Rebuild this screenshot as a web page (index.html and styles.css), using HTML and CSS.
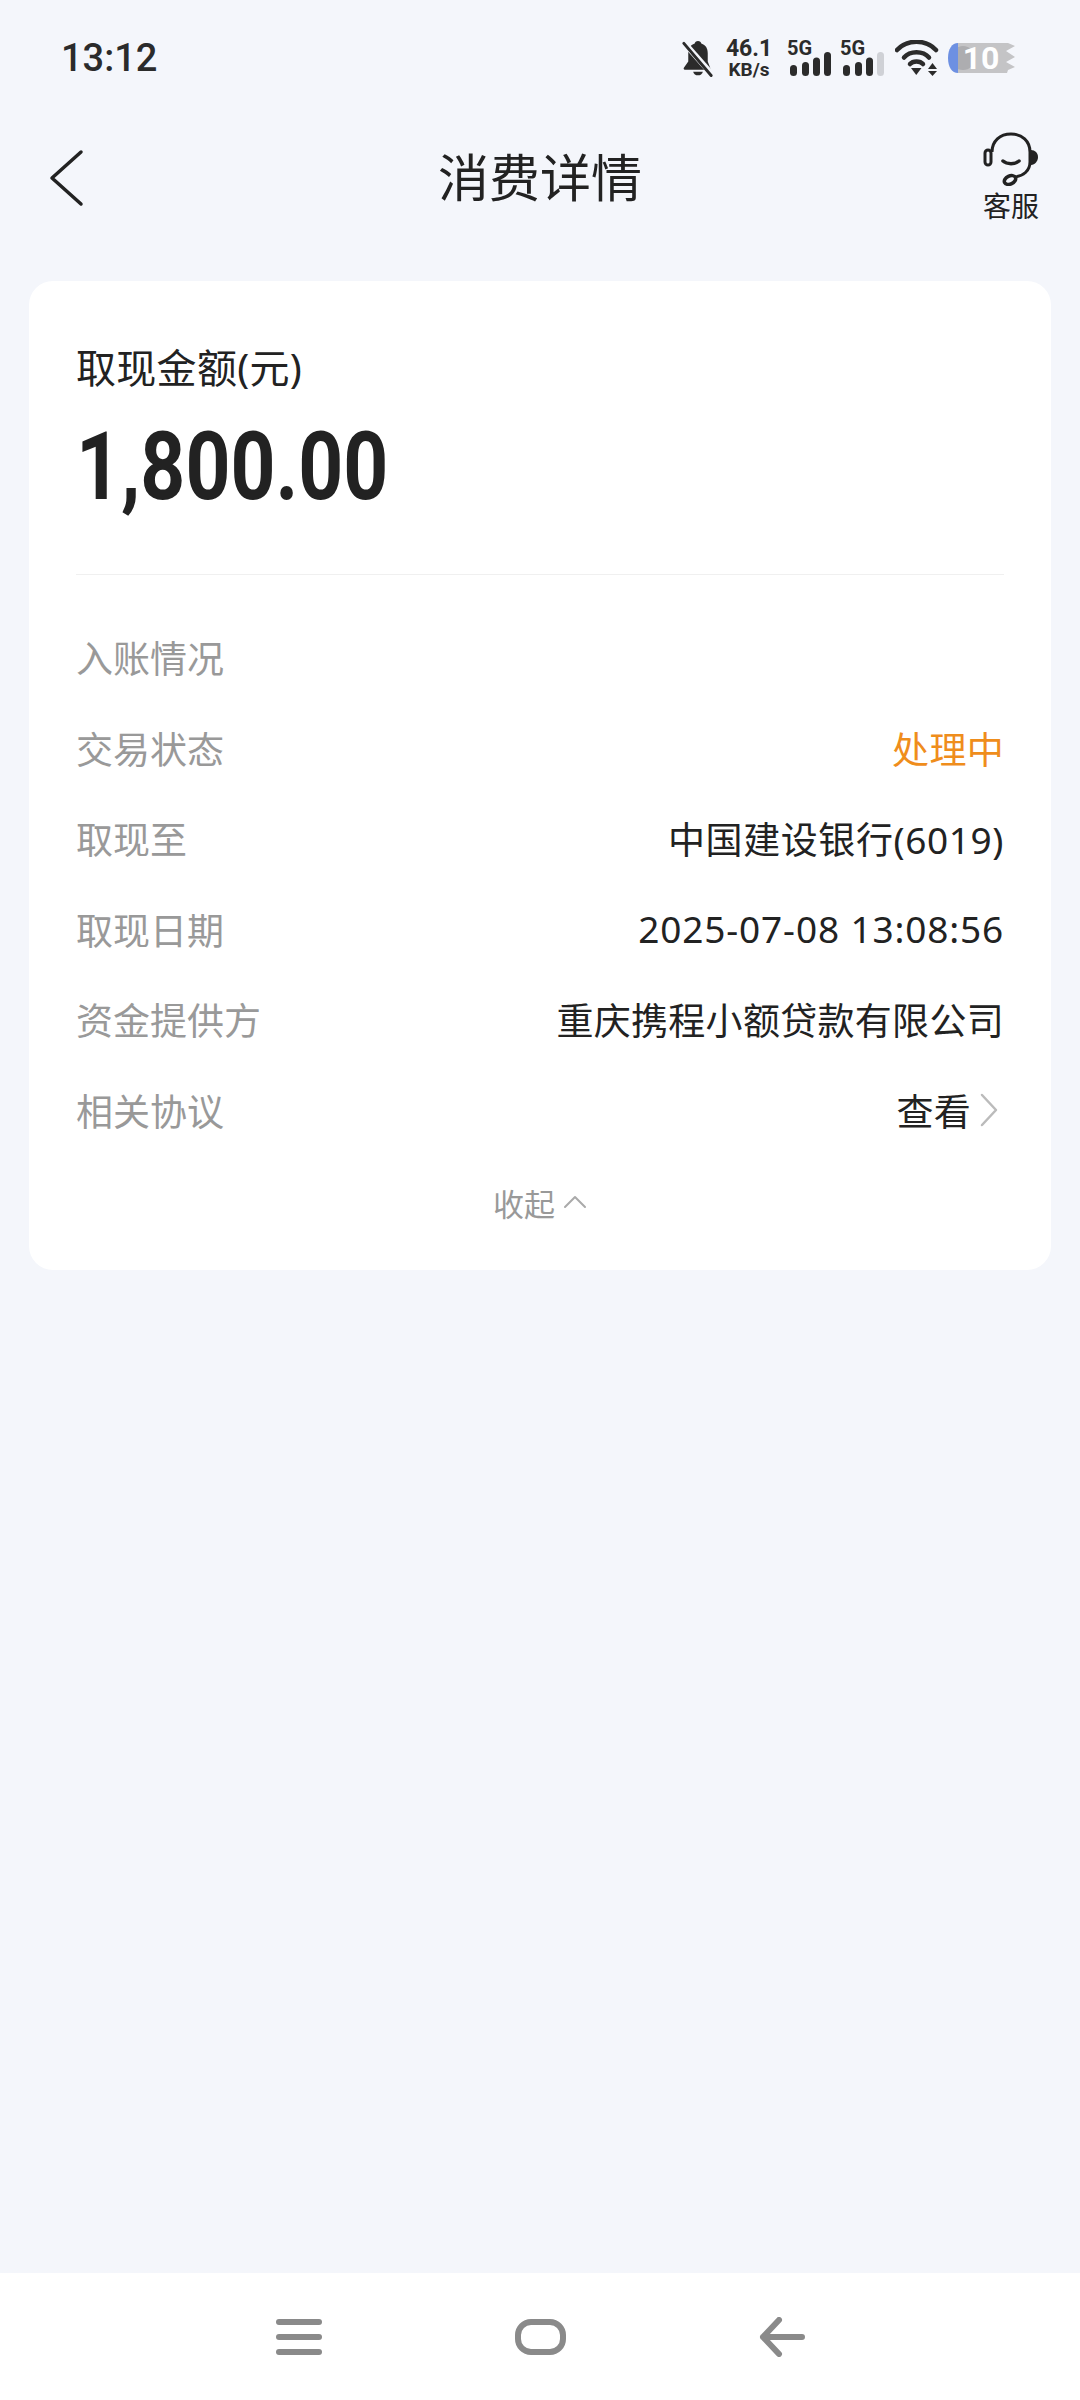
FILE: index.html
```html
<!DOCTYPE html>
<html lang="zh-CN">
<head>
    <meta charset="UTF-8">
    <meta name="viewport" content="width=device-width, initial-scale=1.0">
    <title>消费详情</title>
    <link rel="stylesheet" href="styles.css">
</head>
<body>
    <div class="page">
        <!-- Status bar -->
        <div class="status-bar">
            <span class="time">13:12</span>
            <div class="status-icons">
                <svg class="icon-bell" width="32" height="37" viewBox="0 0 32 38">
                    <path d="M16 1c-2 0-3 1.200-3.400 2.700C8 5.200 6 8.800 6 13.500V22l-4.500 6.500c-.6 1-.1 2 1 2h25c1.100 0 1.600-1 1-2L26 22v-8.500c0-4.700-2-8.300-6.600-9.800C19 2.200 18 1 16 1z" fill="#2b2b2b"/>
                    <path d="M11 32.500h10c-.6 2.300-2.600 3.800-5 3.800s-4.400-1.500-5-3.800z" fill="#2b2b2b"/>
                    <path d="M1 2l30 34" stroke="#f4f6fb" stroke-width="6"/>
                    <path d="M1.500 3.500l28 33" stroke="#2b2b2b" stroke-width="3" stroke-linecap="round"/>
                </svg>
                <div class="net-speed">
                    <span class="speed-num">46.1</span>
                    <span class="speed-unit">KB/s</span>
                </div>
                <div class="signal">
                    <span class="signal-label">5G</span>
                    <svg width="41" height="24" viewBox="0 0 41 24">
                        <rect x="0" y="13" width="7" height="11" rx="3.500" fill="#2b2b2b"/>
                        <rect x="12" y="10" width="7" height="14" rx="3.500" fill="#2b2b2b"/>
                        <rect x="23" y="5.500" width="7" height="18.500" rx="3.500" fill="#2b2b2b"/>
                        <rect x="34" y="0" width="7" height="24" rx="3.500" fill="#2b2b2b"/>
                    </svg>
                </div>
                <div class="signal">
                    <span class="signal-label">5G</span>
                    <svg width="41" height="24" viewBox="0 0 41 24">
                        <rect x="0" y="13" width="7" height="11" rx="3.500" fill="#2b2b2b"/>
                        <rect x="12" y="10" width="7" height="14" rx="3.500" fill="#2b2b2b"/>
                        <rect x="23" y="5.500" width="7" height="18.500" rx="3.500" fill="#2b2b2b"/>
                        <rect x="34" y="0" width="7" height="24" rx="3.500" fill="#cfd1d6"/>
                    </svg>
                </div>
                <svg class="icon-wifi" width="44" height="36" viewBox="0 0 44 36">
                    <path d="M2 10C12 -1 31 -1 41 10" fill="none" stroke="#2b2b2b" stroke-width="4.500" stroke-linecap="round"/>
                    <path d="M9 17.500C15 10.500 28 10.500 34 17.500" fill="none" stroke="#2b2b2b" stroke-width="4.500" stroke-linecap="round"/>
                    <path d="M15 24C18 20.500 25 20.500 28 24" fill="none" stroke="#2b2b2b" stroke-width="4.500" stroke-linecap="round"/>
                    <path d="M16 28h10.500l-5.250 7z" fill="#2b2b2b"/>
                    <path d="M33 29l4.500-6 4.500 6z" fill="#2b2b2b"/>
                    <path d="M33 31l4.500 5 4.500-5z" fill="#2b2b2b"/>
                </svg>
                <div class="battery">
                    <svg class="battery-shape" width="68" height="30" viewBox="0 0 68 30">
                        <path d="M10 0H60l7 3-9 5 9 6-9 5 9 5-7 3-1 3H10z" fill="#c4c4c6"/>
                        <circle cx="15" cy="15" r="12" fill="#adadb0"/>
                        <path d="M10 0v30C4 30 0 24 0 15S4 0 10 0z" fill="#6d90e2"/>
                    </svg>
                    <span class="battery-num">10</span>
                </div>
            </div>
        </div>

        <!-- Header -->
        <div class="nav">
            <svg class="back" width="36" height="58" viewBox="0 0 36 58">
                <path d="M33 3L4 29l0 0L33 55" fill="none" stroke="#222" stroke-width="3.500" stroke-linecap="round" stroke-linejoin="round"/>
            </svg>
            <h1 class="nav-title">消费详情</h1>
            <div class="service">
                <svg width="56" height="54" viewBox="0 0 56 54">
                    <path d="M9 20C9 9 17 2 28 2s19 7 19 18v10c0 9-7 14-15 15" fill="none" stroke="#222" stroke-width="3"/>
                    <rect x="2" y="18" width="6" height="15" rx="3" fill="none" stroke="#222" stroke-width="3"/>
                    <path d="M48 18c4 0 7 3 7 7s-3 8-7 8z" fill="#222"/>
                    <path d="M20 29c4 3.500 12 3.500 16 0" fill="none" stroke="#222" stroke-width="3.500" stroke-linecap="round"/>
                    <ellipse cx="27" cy="48" rx="6" ry="4" transform="rotate(-25 27 48)" fill="none" stroke="#222" stroke-width="3.500"/>
                </svg>
                <span class="service-label">客服</span>
            </div>
        </div>

        <!-- Detail card -->
        <div class="content">
            <div class="card">
                <div class="amount-block">
                    <div class="amount-label">取现金额(元)</div>
                    <div class="amount">1,800.00</div>
                </div>
                <div class="rows">
                    <div class="row">
                        <span class="row-label">入账情况</span>
                    </div>
                    <div class="row">
                        <span class="row-label">交易状态</span>
                        <span class="row-value status">处理中</span>
                    </div>
                    <div class="row">
                        <span class="row-label">取现至</span>
                        <span class="row-value bank">中国建设银行(6019)</span>
                    </div>
                    <div class="row">
                        <span class="row-label">取现日期</span>
                        <span class="row-value date">2025-07-08 13:08:56</span>
                    </div>
                    <div class="row">
                        <span class="row-label">资金提供方</span>
                        <span class="row-value">重庆携程小额贷款有限公司</span>
                    </div>
                    <div class="row">
                        <span class="row-label">相关协议</span>
                        <span class="row-value link">查看
                            <svg width="20" height="34" viewBox="0 0 20 34">
                                <path d="M3 2l14 15L3 32" fill="none" stroke="#bbb" stroke-width="2.500" stroke-linecap="round" stroke-linejoin="round"/>
                            </svg>
                        </span>
                    </div>
                </div>
                <div class="collapse">
                    <span>收起</span>
                    <svg width="24" height="14" viewBox="0 0 24 14">
                        <path d="M2 12L12 2l10 10" fill="none" stroke="#aaa" stroke-width="2" stroke-linecap="round" stroke-linejoin="round"/>
                    </svg>
                </div>
            </div>
        </div>

        <!-- System navigation -->
        <div class="sys-nav">
            <svg width="46" height="36" viewBox="0 0 46 36">
                <rect x="0" y="0" width="46" height="6" rx="3" fill="#8a8a8a"/>
                <rect x="0" y="15" width="46" height="6" rx="3" fill="#8a8a8a"/>
                <rect x="0" y="30" width="46" height="6" rx="3" fill="#8a8a8a"/>
            </svg>
            <svg width="51" height="36" viewBox="0 0 51 36">
                <rect x="3" y="3" width="45" height="30" rx="13" fill="none" stroke="#8a8a8a" stroke-width="6"/>
            </svg>
            <svg width="46" height="40" viewBox="0 0 46 40">
                <path d="M43 20H4M20 3L4 20l16 17" fill="none" stroke="#8a8a8a" stroke-width="6" stroke-linecap="round" stroke-linejoin="round"/>
            </svg>
        </div>
    </div>
</body>
</html>
```

FILE: styles.css
```css
* {
    box-sizing: border-box;
}
body {
    margin: 0;
    background-color: #f4f6fb;
    font-family: "Noto Sans", "Noto Sans CJK SC", sans-serif;
    color: #222;
}
.page {
    display: flex;
    flex-direction: column;
    height: 2400px;
}
.status-bar {
    display: flex;
    justify-content: space-between;
    align-items: center;
    height: 116px;
    padding: 0 64px 0 61px;
    font-family: Roboto, sans-serif;
}
.time {
    font-size: 38px;
    font-weight: 500;
    color: #2b2b2b;
}
.status-icons {
    display: flex;
    align-items: center;
    color: #2b2b2b;
}
.icon-bell {
    margin-right: 13px;
}
.net-speed {
    display: flex;
    flex-direction: column;
    align-items: center;
    width: 44px;
    font-weight: 700;
    margin-right: 19px;
}
.speed-num {
    font-size: 23px;
    line-height: 23px;
}
.speed-unit {
    font-size: 19px;
    line-height: 19px;
}
.signal {
    display: flex;
    flex-direction: column;
    width: 41px;
    margin-right: 12px;
}
.signal-label {
    font-size: 20px;
    font-weight: 700;
    line-height: 14px;
    margin: 0 0 -3px -3px;
}
.icon-wifi {
    margin: 0 9px 0 -1px;
}
.battery {
    position: relative;
    display: flex;
    align-items: center;
    justify-content: center;
    width: 68px;
    height: 30px;
}
.battery-shape {
    position: absolute;
    top: 0;
    left: 0;
}
.battery-num {
    position: relative;
    font-size: 32px;
    font-weight: 700;
    color: #fff;
    margin-left: -2px;
}
.nav {
    display: grid;
    grid-template-columns: 1fr auto 1fr;
    align-items: center;
    height: 122px;
    padding: 0 41px;
}
.back {
    margin: 2px 0 0 7px;
}
.nav-title {
    margin: 0 0 5px 0;
    font-size: 51px;
    font-weight: 400;
}
.service {
    display: flex;
    flex-direction: column;
    align-items: center;
    justify-self: end;
    width: 56px;
}
.service-label {
    font-size: 28px;
    line-height: 34px;
    margin-top: 3px;
    white-space: nowrap;
}
.content {
    flex: 1;
    padding: 43px 29px 0 29px;
}
.card {
    background-color: #fff;
    border-radius: 24px;
    padding: 0 47px 22px 47px;
    height: 989px;
}
.amount-block {
    padding-top: 62px;
    height: 294px;
    border-bottom: 1px solid #f0f0f0;
}
.amount-label {
    font-size: 40px;
    line-height: 50px;
    letter-spacing: .3px;
}
.amount {
    font-family: Roboto, sans-serif;
    font-size: 94px;
    font-weight: 700;
    line-height: 112px;
    margin-top: 18px;
    transform: scaleX(.835);
    transform-origin: left center;
}
.rows {
    padding-top: 37px;
}
.row {
    display: flex;
    justify-content: space-between;
    align-items: center;
    height: 90.5px;
    font-size: 37px;
}
.row-label {
    color: #999;
}
.row-value {
    letter-spacing: .3px;
}
.bank {
    letter-spacing: .6px;
}
.date {
    letter-spacing: .85px;
}
.status {
    color: #ef8d1c;
}
.link {
    display: flex;
    align-items: center;
    gap: 8px;
    margin-right: 5px;
}
.collapse {
    display: flex;
    justify-content: center;
    align-items: center;
    gap: 8px;
    height: 94px;
    font-size: 31px;
    color: #999;
}
.sys-nav {
    display: flex;
    justify-content: center;
    align-items: center;
    gap: 193px;
    height: 127px;
    background-color: #fff;
}
```
